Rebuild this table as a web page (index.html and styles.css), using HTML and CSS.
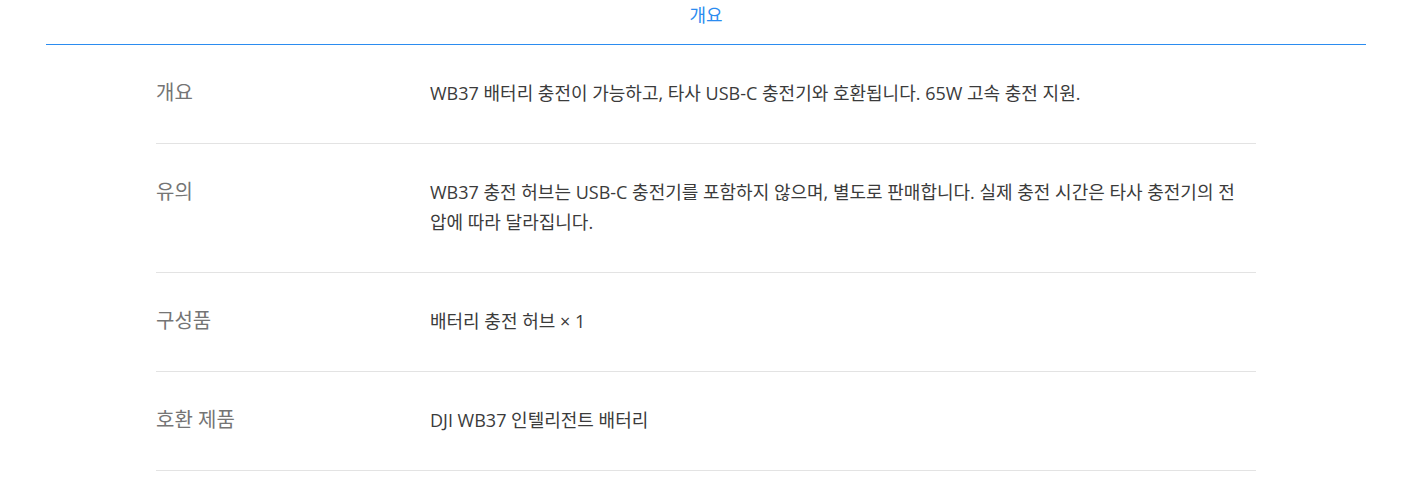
FILE: index.html
```html
<!DOCTYPE html>
<html lang="ko">
<head>
<meta charset="utf-8">
<title>개요</title>
<link rel="stylesheet" href="styles.css">
</head>
<body>
<div class="page">
  <div class="tabs">
    <div class="tab active">개요</div>
  </div>
  <div class="specs">
    <div class="row">
      <div class="label">개요</div>
      <div class="value">WB37 배터리 충전이 가능하고, 타사 USB-C 충전기와 호환됩니다. 65W 고속 충전 지원.</div>
    </div>
    <div class="row">
      <div class="label">유의</div>
      <div class="value">WB37 충전 허브는 USB-C 충전기를 포함하지 않으며, 별도로 판매합니다. 실제 충전 시간은 타사 충전기의 전압에 따라 달라집니다.</div>
    </div>
    <div class="row">
      <div class="label">구성품</div>
      <div class="value">배터리 충전 허브 × 1</div>
    </div>
    <div class="row">
      <div class="label">호환 제품</div>
      <div class="value">DJI WB37 인텔리전트 배터리</div>
    </div>
  </div>
</div>
</body>
</html>
```
FILE: styles.css
```css
html, body {
  margin: 0;
  padding: 0;
  background: #fff;
}
body {
  font-family: "Open Sans", "Noto Sans CJK KR", sans-serif;
  font-size: 18px;
  color: #3b3b3b;
}
.page {
  width: 1320px;
  margin-left: 46px;
}
.tabs {
  display: flex;
  justify-content: center;
  border-bottom: 1px solid #2b8cf0;
}
.tab {
  height: 44px;
  line-height: 30px;
  font-size: 18px;
  color: #2b8cf0;
}
.specs {
  width: 1100px;
  margin: 0 auto;
}
.row {
  display: flex;
  padding: 33px 0 35px;
  border-bottom: 1px solid #e3e3e3;
  line-height: 30px;
}
.label {
  width: 274px;
  flex: none;
  font-size: 20px;
  color: #757575;
}
.value {
  flex: 1;
  padding-right: 10px;
  word-break: break-all;
  color: #3b3b3b;
}
```
